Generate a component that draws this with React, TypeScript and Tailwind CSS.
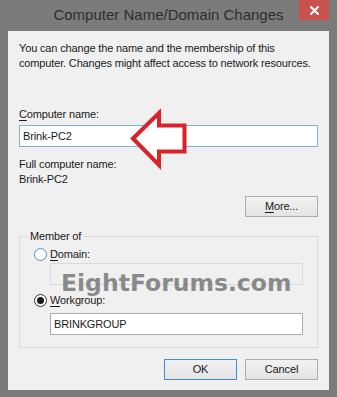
import React from 'react';

const font = { fontFamily: '"Liberation Sans", Arial, sans-serif' };

const Radio: React.FC<{ checked?: boolean }> = ({ checked }) => (
  <span
    className={
      'flex h-[13px] w-[13px] items-center justify-center rounded-full border bg-white ' +
      (checked ? 'border-[#333333]' : 'border-[#4f8fc6]')
    }
  >
    {checked && <span className="h-[7px] w-[7px] rounded-full bg-[#1a1a1a]" />}
  </span>
);

const Button: React.FC<{ label: React.ReactNode; primary?: boolean }> = ({ label, primary }) => (
  <div
    className={
      'flex h-[21px] w-[73px] items-center justify-center border bg-gradient-to-b from-[#f2f2f2] to-[#e4e4e4] text-[#1a1a1a] ' +
      (primary ? 'border-[#3c8fd6]' : 'border-[#adadad]')
    }
  >
    {label}
  </div>
);

export default function App() {
  return (
    <div className="relative h-[397px] w-[337px] overflow-hidden bg-[#7b7b7b]" style={font}>
      {/* title bar */}
      <div className="grid h-[31px] grid-cols-[1fr_auto_1fr]">
        <div />
        <div className="pt-[4px] text-[15px] leading-[22px] text-[#2e2e2e]">Computer Name/Domain Changes</div>
        <div className="flex justify-end pr-[8px]">
          <div className="flex h-[20px] w-[30px] items-center justify-center bg-[#c9514e]">
            <svg width="9" height="9" viewBox="0 0 9 9">
              <path d="M1 1 L8 8 M8 1 L1 8" stroke="#ffffff" strokeWidth="2" strokeLinecap="square" />
            </svg>
          </div>
        </div>
      </div>

      {/* dialog body */}
      <div className="mx-[8px] h-[359px] bg-[#f0f0f0] px-[11px] text-[11px] leading-[15px] tracking-[-0.15px] text-[#1a1a1a]">
        <p className="whitespace-nowrap pt-[10px]">
          You can change the name and the membership of this
          <br />
          computer. Changes might affect access to network resources.
        </p>

        <div className="mt-[36px]">
          <span className="underline underline-offset-2">C</span>omputer name:
        </div>
        <div className="mt-[3px] flex h-[22px] items-center border border-[#7fb2df] bg-white px-[3px]">Brink-PC2</div>

        <div className="mt-[10px]">Full computer name:</div>
        <div>Brink-PC2</div>

        <div className="mt-[9px] flex justify-end">
          <Button
            label={
              <span>
                <span className="underline underline-offset-2">M</span>ore...
              </span>
            }
          />
        </div>

        <fieldset className="mt-[12px] border border-[#dcdcdc] px-[14px] pb-[12px]">
          <legend className="ml-[-6px] px-[2px]">Member of</legend>
          <div className="mt-[3px] flex items-center gap-[3px]">
            <Radio />
            <span>
              <span className="underline underline-offset-2">D</span>omain:
            </span>
          </div>
          <div className="ml-[16px] mt-[1px] h-[22px] border border-[#dadada] bg-[#f0f0f0]" />
          <div className="mt-[8px] flex items-center gap-[3px]">
            <Radio checked />
            <span>
              <span className="underline underline-offset-2">W</span>orkgroup:
            </span>
          </div>
          <div className="ml-[16px] mt-[5px] flex h-[22px] items-center border border-[#abadb3] bg-white px-[3px]">
            BRINKGROUP
          </div>
        </fieldset>

        <div className="mt-[11px] flex justify-end gap-[8px]">
          <Button label="OK" primary />
          <Button label="Cancel" />
        </div>
      </div>

      {/* annotation arrow */}
      <svg className="pointer-events-none absolute left-0 top-0" width="337" height="397">
        <polygon
          points="133,138.5 159,113 159,125.5 184.5,125.5 184.5,151.5 159,151.5 159,165"
          fill="#ffffff"
          stroke="#d8232a"
          strokeWidth="4"
          strokeLinejoin="miter"
        />
      </svg>

      {/* watermark */}
      <div
        className="pointer-events-none absolute left-[61px] top-[268px] text-[23.5px] font-bold leading-[30px] text-[#6e6e6e]/80"
        style={{ fontFamily: '"DejaVu Sans", sans-serif' }}
      >
        EightForums.com
      </div>
    </div>
  );
}
